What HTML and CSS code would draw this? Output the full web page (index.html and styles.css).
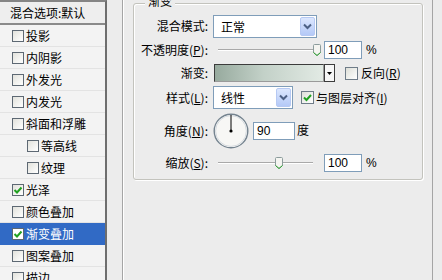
FILE: index.html
```html
<!DOCTYPE html>
<html lang="zh-CN">
<head>
    <meta charset="UTF-8">
    <title>图层样式 - 渐变叠加</title>
    <link rel="stylesheet" href="styles.css">
</head>
<body>
    <div class="dialog">
        <div class="styles-list">
            <div class="list-head">混合选项:默认</div>
            <div class="list-item"><span class="box"></span>投影</div>
            <div class="list-item"><span class="box"></span>内阴影</div>
            <div class="list-item"><span class="box"></span>外发光</div>
            <div class="list-item"><span class="box"></span>内发光</div>
            <div class="list-item"><span class="box"></span>斜面和浮雕</div>
            <div class="list-item sub"><span class="box"></span>等高线</div>
            <div class="list-item sub"><span class="box"></span>纹理</div>
            <div class="list-item"><span class="box checked"><svg width="10" height="10" viewBox="0 0 10 10"><polyline points="1.5,5 4,7.5 8.5,2.5" fill="none" stroke="#21a121" stroke-width="2"/></svg></span>光泽</div>
            <div class="list-item"><span class="box"></span>颜色叠加</div>
            <div class="list-item selected"><span class="box checked"><svg width="10" height="10" viewBox="0 0 10 10"><polyline points="1.5,5 4,7.5 8.5,2.5" fill="none" stroke="#21a121" stroke-width="2"/></svg></span>渐变叠加</div>
            <div class="list-item"><span class="box"></span>图案叠加</div>
            <div class="list-item"><span class="box"></span>描边</div>
        </div>

        <div class="panel">
            <div class="group">
                <span class="group-title">渐变</span>

                <div class="field row-mode">
                    <span class="field-label">混合模式:</span>
                    <div class="combo combo-wide">
                        <span class="combo-text">正常</span>
                        <span class="combo-btn"><svg width="9" height="7" viewBox="0 0 9 7"><polyline points="1,1.5 4.5,5 8,1.5" fill="none" stroke="#4d6185" stroke-width="2"/></svg></span>
                    </div>
                </div>

                <div class="field row-opacity">
                    <span class="field-label">不透明度(<u>P</u>):</span>
                    <div class="slider">
                        <span class="thumb" style="left: 95px;"><svg width="8" height="12" viewBox="0 0 8 12"><path d="M1.5,0.5 h5 a1,1 0 0 1 1,1 v7 l-3.5,3 l-3.5,-3 v-7 a1,1 0 0 1 1,-1z" fill="#f5f5f1" stroke="#8c9c9c"/><path d="M0.5,8.5 l3.5,3 l3.5,-3" fill="none" stroke="#2aa52a"/></svg></span>
                    </div>
                    <span class="num">100</span>
                    <span class="unit">%</span>
                </div>

                <div class="field row-gradient">
                    <span class="field-label">渐变:</span>
                    <div class="grad">
                        <span class="grad-bar"></span>
                        <span class="grad-arrow"><svg width="5" height="3" viewBox="0 0 5 3"><polygon points="0,0 5,0 2.5,3" fill="#000"/></svg></span>
                    </div>
                    <span class="check check-reverse"></span>
                    <span class="check-text">反向(<u>R</u>)</span>
                </div>

                <div class="field row-style">
                    <span class="field-label">样式(<u>L</u>):</span>
                    <div class="combo combo-narrow">
                        <span class="combo-text">线性</span>
                        <span class="combo-btn"><svg width="9" height="7" viewBox="0 0 9 7"><polyline points="1,1.5 4.5,5 8,1.5" fill="none" stroke="#4d6185" stroke-width="2"/></svg></span>
                    </div>
                    <span class="check check-align"><svg width="11" height="11" viewBox="0 0 11 11"><polyline points="2,5.5 4.5,8 9,3" fill="none" stroke="#21a121" stroke-width="2"/></svg></span>
                    <span class="check-text check-text-tight">与图层对齐(<u>I</u>)</span>
                </div>

                <div class="field row-angle">
                    <span class="field-label">角度(<u>N</u>):</span>
                    <svg class="dial" width="36" height="36" viewBox="0 0 36 36">
                        <circle cx="18" cy="18" r="16.8" fill="#f7f7f5" stroke="#74838f" stroke-width="1.4"/>
                        <circle cx="18" cy="18" r="15.4" fill="none" stroke="#d6dbe0" stroke-width="1"/>
                        <line x1="18" y1="18" x2="18" y2="2" stroke="#000" stroke-width="1"/>
                        <circle cx="18" cy="18" r="1.6" fill="#000"/>
                    </svg>
                    <span class="num num-angle">90</span>
                    <span class="unit unit-angle">度</span>
                </div>

                <div class="field row-scale">
                    <span class="field-label">缩放(<u>S</u>):</span>
                    <div class="slider">
                        <span class="thumb" style="left: 57px;"><svg width="8" height="12" viewBox="0 0 8 12"><path d="M1.5,0.5 h5 a1,1 0 0 1 1,1 v7 l-3.5,3 l-3.5,-3 v-7 a1,1 0 0 1 1,-1z" fill="#f5f5f1" stroke="#8c9c9c"/><path d="M0.5,8.5 l3.5,3 l3.5,-3" fill="none" stroke="#2aa52a"/></svg></span>
                    </div>
                    <span class="num">100</span>
                    <span class="unit">%</span>
                </div>
            </div>
        </div>
    </div>
</body>
</html>
```

FILE: styles.css
```css
body {
    margin: 0;
    width: 442px;
    height: 280px;
    overflow: hidden;
    background-color: #ececec;
    color: #000;
    font-family: "Noto Sans CJK SC", "Liberation Sans", sans-serif;
    font-size: 12px;
    line-height: 14px;
}

u {
    text-decoration: underline;
    text-underline-offset: 1px;
}

.dialog {
    display: flex;
    height: 280px;
}

/* style list on the left */
.styles-list {
    width: 107px;
    flex-shrink: 0;
    box-sizing: border-box;
    border-top: 2px solid #858585;
    border-right: 2px solid #6e6e6e;
    background-color: #f3f3f3;
}

.list-head {
    height: 23px;
    box-sizing: border-box;
    border-bottom: 2px solid #8a8a8a;
    padding-left: 10px;
    line-height: 21px;
    background-color: #eeeeee;
}

.list-item {
    height: 22px;
    box-sizing: border-box;
    border-bottom: 1px solid #e3e3e3;
    display: flex;
    align-items: center;
    padding-left: 12px;
}

.list-item.sub {
    padding-left: 27px;
}

.list-item.selected {
    background-color: #316ac5;
    color: #fff;
    border-bottom-color: #316ac5;
}

.box {
    width: 12px;
    height: 12px;
    box-sizing: border-box;
    border: 1px solid #5d6873;
    background: linear-gradient(135deg, #e2e2dc, #ffffff);
    margin-right: 2px;
    display: flex;
    align-items: center;
    justify-content: center;
}

.selected .box {
    background: #fff;
}

/* right panel */
.panel {
    margin-left: 15px;
    width: 311px;
    box-sizing: border-box;
    border-left: 1px solid #a5a5a5;
    border-right: 1px solid #a5a5a5;
    box-shadow: inset 1px 0 #fff;
    padding: 3px 0 0 10px;
}

.group {
    position: relative;
    width: 290px;
    box-sizing: border-box;
    border: 1px solid #c3c3bd;
    border-radius: 3px;
    box-shadow: 1px 1px 0 #fff, inset 1px 1px 0 #fff;
    padding: 10px 0 5px 0;
}

.group-title {
    position: absolute;
    left: 11px;
    top: -10px;
    padding: 0 3px;
    background-color: #ececec;
}

.field {
    display: flex;
    align-items: center;
}

.row-mode { height: 24px; }
.row-opacity { height: 23px; }
.row-gradient { height: 24px; }
.row-style { height: 25px; }
.row-angle { height: 42px; }
.row-scale { height: 22px; }

.field-label {
    width: 74px;
    flex-shrink: 0;
    text-align: right;
}

.combo {
    display: flex;
    height: 23px;
    box-sizing: border-box;
    border: 1px solid #7f9db9;
    background-color: #fff;
    margin-left: 5px;
}

.combo-wide { width: 104px; }
.combo-narrow { width: 80px; }

.combo-text {
    flex: 1;
    padding-left: 7px;
    line-height: 21px;
}

.combo-btn {
    width: 15px;
    margin: 1px;
    box-sizing: border-box;
    border: 1px solid #b6c9f3;
    border-radius: 2px;
    background: linear-gradient(#dce7fe, #b4c9f7);
    display: flex;
    align-items: center;
    justify-content: center;
}

.slider {
    position: relative;
    width: 102px;
    height: 14px;
    margin-left: 10px;
}

.slider::before {
    content: "";
    position: absolute;
    left: 0;
    top: 6px;
    width: 95px;
    border-top: 1px solid #a9a9a9;
    border-bottom: 1px solid #fff;
}

.thumb {
    position: absolute;
    top: 1px;
    width: 8px;
    height: 12px;
    display: flex;
}

.num {
    width: 38px;
    height: 18px;
    box-sizing: border-box;
    border: 1px solid #7f9db9;
    background-color: #fff;
    margin-left: 4px;
    padding-left: 3px;
    font-family: "Liberation Sans", sans-serif;
    font-size: 12px;
    line-height: 16px;
}

.num-angle {
    width: 42px;
}

.unit {
    margin-left: 4px;
    font-family: "Liberation Sans", "Noto Sans CJK SC", sans-serif;
}

.unit-angle {
    margin-left: 2px;
}

.grad {
    display: flex;
    height: 18px;
    margin-left: 6px;
}

.grad-bar {
    width: 110px;
    box-sizing: border-box;
    border: 1px solid;
    border-color: #3c3c3c #9a9a9a #9a9a9a #3c3c3c;
    background: linear-gradient(to right, #97aa9e, #c3d1c8 45%, #e2eae4);
}

.grad-arrow {
    width: 11px;
    box-sizing: border-box;
    border: 1px solid #3c3c3c;
    background-color: #f6f6f6;
    display: flex;
    align-items: center;
    justify-content: center;
}

.check {
    width: 13px;
    height: 13px;
    box-sizing: border-box;
    border: 1px solid #6f7c88;
    background: linear-gradient(135deg, #dedfd8, #ffffff);
    display: flex;
    align-items: center;
    justify-content: center;
}

.check-reverse { margin-left: 10px; }
.check-align { margin-left: 8px; }

.check-text {
    margin-left: 3px;
}

.check-text-tight {
    margin-left: 2px;
}

.dial {
    margin-left: 5px;
    flex-shrink: 0;
}
```
